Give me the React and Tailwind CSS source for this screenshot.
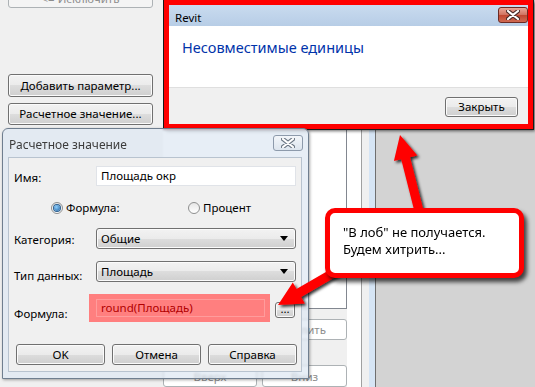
import React from 'react';

const face =
  'flex items-center border border-[#707070] rounded-[3px] bg-[linear-gradient(to_bottom,#f2f2f2,#ebebeb_50%,#dddddd_50%,#cfcfcf)] shadow-[inset_0_0_0_1px_#fbfbfb] text-[11.5px] text-black leading-none';
const btn = `${face} justify-center`;
const btnOff =
  'flex justify-center border border-[#adb2b5] rounded-[3px] bg-[#f4f4f4] text-[11.5px] text-[#8d8d8d] leading-none';

function CloseX({ fill, stroke }) {
  return (
    <svg width="14" height="10" viewBox="0 0 14 10">
      <path d="M2 1 L12 9 M12 1 L2 9" stroke={stroke} strokeWidth="4.2" strokeLinecap="round" />
      <path d="M2 1 L12 9 M12 1 L2 9" stroke={fill} strokeWidth="2.2" strokeLinecap="round" />
    </svg>
  );
}

function Select({ value }) {
  return (
    <div className={`${face} justify-between w-[200px] h-[21px] pl-[4px] pr-[7px]`}>
      <span>{value}</span>
      <svg width="8" height="5" viewBox="0 0 8 5">
        <path d="M0 0 H8 L4 5 Z" fill="#000" />
      </svg>
    </div>
  );
}

function Radio({ checked, label }) {
  return (
    <div className="flex items-center gap-[3px]">
      <div className="w-[12px] h-[12px] rounded-full border border-[#8e8f8f] bg-[linear-gradient(to_bottom,#e6e6e6,#ffffff)] flex items-center justify-center">
        {checked && (
          <div className="w-[6px] h-[6px] rounded-full bg-[radial-gradient(circle_at_40%_35%,#8fd0ff,#1b5e9e)] shadow-[0_0_0_1px_#2c5f8f]" />
        )}
      </div>
      <span>{label}</span>
    </div>
  );
}

export default function App() {
  return (
    <div className="relative w-[535px] h-[387px] overflow-hidden bg-[#d3d3d3] font-['Noto_Sans',sans-serif] text-[11.5px] text-black">
      {/* form behind */}
      <div className="flex h-full">
        <div className="w-[347px] bg-[#f0f0f0] flex">
          <div className="w-[163px] pl-[8px] pr-[10px] flex flex-col">
            <div className={`${btnOff} h-[22px] -mt-[14px] items-end pb-[3px]`}>&lt;= Исключить</div>
            <div className={`${btn} h-[23px] mt-[66px]`}>Добавить параметр...</div>
            <div className={`${btn} h-[22px] mt-[6px]`}>Расчетное значение...</div>
          </div>
          <div className="flex-1 flex flex-col">
            <div className="h-[312px] bg-white border-r border-b border-[#828790]" />
            <div className={`${btnOff} items-center bg-white self-end w-[87px] h-[21px] mt-[10px]`}>Удалить</div>
            <div className="flex gap-[5px] mt-[25px]">
              <div className={`${btnOff} bg-white w-[94px] h-[22px] items-start pt-[5px]`}>Вверх</div>
              <div className={`${btnOff} bg-white w-[85px] h-[22px] items-start pt-[5px]`}>Вниз</div>
            </div>
          </div>
        </div>
        <div className="w-[15px] bg-white border-r border-[#a0a0a0]" />
        <div className="w-[7px] bg-[#f0f0f0]" />
        <div className="w-[6px] bg-[#d6e5f5]" />
        <div className="w-[1px] bg-[#6f6f6f]" />
        <div className="flex-1 bg-[#d3d3d3]" />
      </div>

      {/* Revit message */}
      <div className="absolute left-[164px] top-0 w-[369px] h-[129px] border-[5px] border-[#ff0000] shadow-[0_0_0_1px_#1a1a1a,2px_2px_3px_rgba(0,0,0,0.6)] flex flex-col bg-white">
        <div className="h-[21px] bg-[linear-gradient(to_bottom,#c9dbef,#b7cde6)] flex items-start justify-between pl-[6px]">
          <span className="mt-[4px] text-black">Revit</span>
          <div className="mt-[2px] w-[30px] h-[16px] rounded-[3px] border border-[#6b2a23] bg-[linear-gradient(to_bottom,#eaa798,#d0715f_50%,#c0452f_50%,#cf6a52)] flex items-center justify-center">
            <CloseX fill="#ffffff" stroke="#4a2a28" />
          </div>
        </div>
        <div className="h-[61px] bg-white pl-[13px] pt-[11px]">
          <span className="text-[14.5px] text-[#0033aa]">Несовместимые единицы</span>
        </div>
        <div className="flex-1 bg-[#f0f0f0] border-t border-[#dfdfdf] flex justify-end items-start pr-[10px] pt-[9px]">
          <div className={`${btn} border-[#3c7fb1] w-[73px] h-[20px]`}>Закрыть</div>
        </div>
      </div>

      {/* Calculated value dialog */}
      <div className="absolute left-[2px] top-[128px] w-[307px] h-[251px] border border-[#6f7e8f] rounded-t-[6px] bg-[rgba(222,231,242,0.72)] backdrop-blur-[1px] flex flex-col pl-[5px] pr-[6px] pb-[6px] shadow-[1px_1px_3px_rgba(0,0,0,0.35)]">
        <div className="h-[28px] flex items-start justify-between">
          <span className="mt-[7px] pl-[1px] text-[12px] text-[#3c3c3c]">Расчетное значение</span>
          <div className="mt-[6px] mr-[-1px] w-[30px] h-[16px] rounded-[3px] border border-[#8d9aab] bg-[linear-gradient(to_bottom,#f3f6fa,#dde5ee)] flex items-center justify-center">
            <CloseX fill="#ffffff" stroke="#6b7684" />
          </div>
        </div>
        <div className="flex-1 bg-[#f0f0f0] border border-[#b8c3cf] flex flex-col">
          <div className="flex items-center mt-[8px] h-[20px]">
            <span className="w-[87px] pl-[5px] pt-[3px]">Имя:</span>
            <div className="w-[200px] h-[20px] bg-white border border-[#e0e3e8] flex items-center pl-[4px]">Площадь окр</div>
          </div>
          <div className="flex items-center h-[20px] mt-[12px] pl-[42px]">
            <div className="w-[137px]">
              <Radio checked label="Формула:" />
            </div>
            <Radio label="Процент" />
          </div>
          <div className="flex items-center h-[21px] mt-[10px]">
            <span className="w-[87px] pl-[5px] pt-[2px]">Категория:</span>
            <Select value="Общие" />
          </div>
          <div className="flex items-center h-[21px] mt-[12px]">
            <span className="w-[87px] pl-[5px] pt-[9px]">Тип данных:</span>
            <Select value="Площадь" />
          </div>
          <div className="flex h-[28px] mt-[12px]">
            <span className="w-[80px] pl-[5px] self-end">Формула:</span>
            <div className="w-[181px] h-[28px] bg-[#ff7f7f] pl-[7px] pr-[5px] pt-[5px]">
              <div className="h-[18px] border border-[#ff9c9c] flex items-center pl-[4px] text-[#b00000]">round(Площадь)</div>
            </div>
            <div className={`${btn} w-[20px] h-[16px] ml-[5px] mt-[8px] items-end pb-[3px]`}>...</div>
          </div>
          <div className="flex gap-[7px] pl-[7px] mt-[22px]">
            <div className={`${btn} w-[89px] h-[21px]`}>OK</div>
            <div className={`${btn} w-[89px] h-[21px]`}>Отмена</div>
            <div className={`${btn} w-[89px] h-[21px]`}>Справка</div>
          </div>
        </div>
      </div>

      {/* arrows */}
      <svg className="absolute inset-0 pointer-events-none" width="535" height="387" viewBox="0 0 535 387">
        <defs>
          <filter id="sh" x="-20%" y="-20%" width="140%" height="140%">
            <feDropShadow dx="2" dy="2" stdDeviation="1.6" floodColor="#000" floodOpacity="0.8" />
          </filter>
        </defs>
        <g filter="url(#sh)" fill="#ff0000">
          <polygon points="400,135 417.3,155.5 410,157.3 424.4,214 415.6,216 401.2,159.3 393.9,161.1" />
          <polygon points="278,305 292.8,282.6 296.5,289.1 344.9,261 349.5,268.8 301.1,296.9 304.8,303.4" />
        </g>
      </svg>

      {/* callout */}
      <div className="absolute left-[325px] top-[208px] w-[199px] h-[70px] rounded-[10px] border-[5px] border-[#ff0000] bg-white shadow-[3px_4px_4px_rgba(0,0,0,0.7)] pl-[13px] pt-[11px] text-[13px] leading-[17px]">
        <div>"В лоб" не получается.</div>
        <div>Будем хитрить...</div>
      </div>
    </div>
  );
}
